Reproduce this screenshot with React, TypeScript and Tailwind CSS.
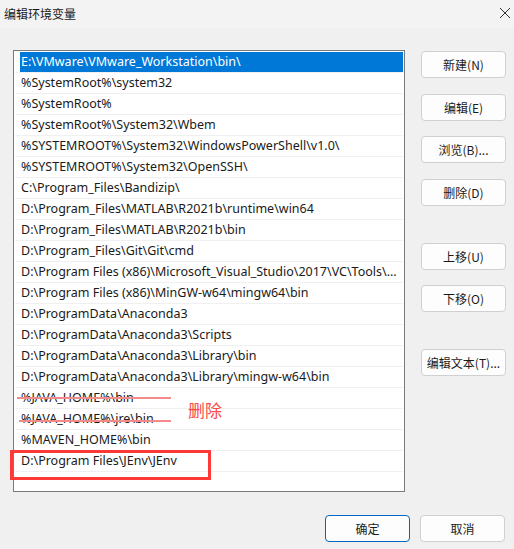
import React from "react"

const paths = [
  "E:\\VMware\\VMware_Workstation\\bin\\",
  "%SystemRoot%\\system32",
  "%SystemRoot%",
  "%SystemRoot%\\System32\\Wbem",
  "%SYSTEMROOT%\\System32\\WindowsPowerShell\\v1.0\\",
  "%SYSTEMROOT%\\System32\\OpenSSH\\",
  "C:\\Program_Files\\Bandizip\\",
  "D:\\Program_Files\\MATLAB\\R2021b\\runtime\\win64",
  "D:\\Program_Files\\MATLAB\\R2021b\\bin",
  "D:\\Program_Files\\Git\\Git\\cmd",
  "D:\\Program Files (x86)\\Microsoft_Visual_Studio\\2017\\VC\\Tools\\...",
  "D:\\Program Files (x86)\\MinGW-w64\\mingw64\\bin",
  "D:\\ProgramData\\Anaconda3",
  "D:\\ProgramData\\Anaconda3\\Scripts",
  "D:\\ProgramData\\Anaconda3\\Library\\bin",
  "D:\\ProgramData\\Anaconda3\\Library\\mingw-w64\\bin",
  "%JAVA_HOME%\\bin",
  "%JAVA_HOME%\\jre\\bin",
  "%MAVEN_HOME%\\bin",
  "D:\\Program Files\\JEnv\\JEnv",
]

const uiFont = "font-['Noto_Sans','Noto_Sans_CJK_SC',sans-serif]"
const cjkFont = "font-['Noto_Sans_CJK_SC',sans-serif]"

function DlgButton({ label, primary = false, className = "" }: { label: string; primary?: boolean; className?: string }) {
  return (
    <button
      className={`h-[27px] w-[85px] rounded-[4px] border bg-[#fdfdfd] text-[12px] text-[#1a1a1a] ${cjkFont} ${
        primary ? "border-[#0067c0]" : "border-[#d0d0d0]"
      } ${className}`}
    >
      {label}
    </button>
  )
}

export default function App() {
  return (
    <div className="relative w-[514px] h-[549px] bg-[#f0f0f0] overflow-hidden">
      {/* title bar */}
      <div className="h-[28px] bg-[#f3f3f3] flex items-center justify-between pl-[4px] pr-[1px]">
        <span className={`text-[12px] text-[#1a1a1a] ${cjkFont}`}>编辑环境变量</span>
        <svg width="16" height="16" viewBox="0 0 16 16" className="mt-[-2px]">
          <path d="M3 3 L13 13 M13 3 L3 13" stroke="#333" strokeWidth="1" fill="none" />
        </svg>
      </div>

      <div className="flex pl-[13px] pt-[22px]">
        {/* path list */}
        <div className="w-[392px] h-[442px] border border-[#7a7a7a] bg-white pt-[1px] pl-[1px] pr-[1px]">
          {paths.map((p, i) => (
            <div
              key={i}
              className={`h-[21px] border-b border-[#f0f0f0] flex items-center ${i === 0 ? "pl-[5px]" : ""}`}
            >
              <div
                className={`h-full w-full flex items-center whitespace-nowrap overflow-hidden text-[12.5px] ${uiFont} ${
                  i === 0 ? "bg-[#0078d7] text-white pl-[1px]" : "text-[#1a1a1a] pl-[6px]"
                }`}
              >
                {p}
              </div>
            </div>
          ))}
        </div>

        {/* side buttons */}
        <div className="ml-[16px] flex flex-col pt-[1px]">
          <DlgButton label="新建(N)" />
          <DlgButton label="编辑(E)" className="mt-[16px]" />
          <DlgButton label="浏览(B)..." className="mt-[15px]" />
          <DlgButton label="删除(D)" className="mt-[16px]" />
          <DlgButton label="上移(U)" className="mt-[37px]" />
          <DlgButton label="下移(O)" className="mt-[15px]" />
          <DlgButton label="编辑文本(T)..." className="mt-[37px]" />
        </div>
      </div>

      {/* bottom buttons */}
      <div className="flex justify-end gap-[10px] pr-[9px] mt-[23px]">
        <DlgButton label="确定" primary />
        <DlgButton label="取消" />
      </div>

      {/* red annotations */}
      <div className="absolute left-[17px] top-[397px] w-[154px] h-[2px] bg-[#f38b8b]" />
      <div className="absolute left-[19px] top-[420px] w-[152px] h-[2px] bg-[#f38b8b]" />
      <span className={`absolute left-[188px] top-[401px] text-[17px] leading-none text-[#fb4b4b] ${cjkFont}`}>删除</span>
      <div className="absolute left-[10px] top-[450px] w-[201px] h-[30px] border-[3px] border-[#ff3838]" />
    </div>
  )
}
